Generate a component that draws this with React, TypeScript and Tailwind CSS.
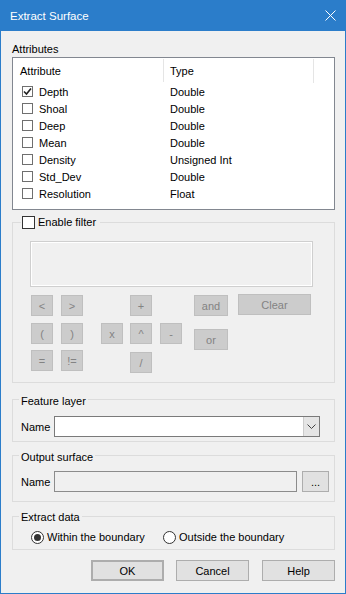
import React from "react";

const rows = [
  { name: "Depth", type: "Double", checked: true },
  { name: "Shoal", type: "Double" },
  { name: "Deep", type: "Double" },
  { name: "Mean", type: "Double" },
  { name: "Density", type: "Unsigned Int" },
  { name: "Std_Dev", type: "Double" },
  { name: "Resolution", type: "Float" },
];

const OpBtn = ({ label, className = "" }: { label: string; className?: string }) => (
  <div
    className={`h-[21px] w-[22px] flex items-center justify-center bg-[#cccccc] border border-[#bfbfbf] text-[#838383] ${className}`}
  >
    {label}
  </div>
);

const ListCheck = ({ checked }: { checked?: boolean }) => (
  <div className="w-[11px] h-[11px] border border-[#6f6f6f] bg-white flex items-center justify-center shrink-0">
    {checked && (
      <svg width="9" height="9" viewBox="0 0 9 9">
        <path d="M1 4.5 L3.5 7 L8 1.5" fill="none" stroke="#222" strokeWidth="1.6" />
      </svg>
    )}
  </div>
);

const Legend = ({ text, className = "" }: { text: string; className?: string }) => (
  <div className={`flex h-[14px] ${className}`}>
    <span className="ml-[6px] px-[2px] bg-[#f0f0f0]">{text}</span>
  </div>
);

const Radio = ({ checked }: { checked?: boolean }) => (
  <div className="w-[13px] h-[13px] rounded-full border border-[#333] bg-white flex items-center justify-center shrink-0">
    {checked && <div className="w-[7px] h-[7px] rounded-full bg-[#333]" />}
  </div>
);

const DlgBtn = ({ label, className = "" }: { label: string; className?: string }) => (
  <div
    className={`w-[73px] h-[21px] flex items-center justify-center bg-[#e1e1e1] border border-[#adadad] ${className}`}
  >
    {label}
  </div>
);

export default function App() {
  return (
    <div className="w-[346px] h-[594px] bg-[#2b7dca] flex flex-col font-['Liberation_Sans',Arial,sans-serif] text-[11px] leading-[14px] text-black">
      {/* title bar */}
      <div className="h-[31px] shrink-0 flex items-center pl-[10px] pr-[10px] text-white text-[11.5px]">
        <span className="flex-1">Extract Surface</span>
        <svg width="11" height="11" viewBox="0 0 11 11">
          <path d="M0.5 0.5 L10.5 10.5 M10.5 0.5 L0.5 10.5" stroke="#fff" strokeWidth="1" />
        </svg>
      </div>

      <div className="flex-1 mx-px mb-px bg-[#f0f0f0] pl-[11px] pr-[10px] flex flex-col">
        <div className="mt-[11px] h-[14px]">Attributes</div>

        {/* attribute list */}
        <div className="mt-px h-[153px] border border-[#828790] bg-white">
          <div className="flex items-center h-[25px]">
            <div className="w-[150px] pl-[7px] mt-px">Attribute</div>
            <div className="w-px h-[23px] bg-[#e5e5e5]" />
            <div className="w-[149px] pl-[6px] mt-px">Type</div>
            <div className="w-px h-[24px] bg-[#e5e5e5]" />
          </div>
          {rows.map((r) => (
            <div key={r.name} className="flex items-center h-[17px]">
              <div className="w-[157px] flex items-center pl-[9px]">
                <ListCheck checked={r.checked} />
                <span className="ml-[6px]">{r.name}</span>
              </div>
              <span>{r.type}</span>
            </div>
          ))}
        </div>

        {/* filter */}
        <div className="mt-[12px] border border-[#dcdcdc] pb-[9px]">
          <div className="-mt-[7px] h-[13px] flex">
            <div className="ml-[8px] px-px pr-[4px] bg-[#f0f0f0] flex items-center">
              <div className="w-[13px] h-[13px] border border-[#333] bg-white" />
              <span className="ml-[3px] leading-[13px]">Enable filter</span>
            </div>
          </div>
          <div className="mt-[12px] ml-[17px] w-[283px] h-[46px] border border-[#cfcfcf] bg-[#f0f0f0] shadow-[inset_0_0_0_1px_#ffffff]" />
          <div className="mt-[7px] ml-[18px] flex items-start">
            <div className="flex flex-col">
              <OpBtn label="<" className="mt-px" />
              <OpBtn label="(" className="mt-[7px]" />
              <OpBtn label="=" className="mt-[6px]" />
            </div>
            <div className="flex flex-col ml-[8px]">
              <OpBtn label=">" className="mt-px" />
              <OpBtn label=")" className="mt-[7px]" />
              <OpBtn label="!=" className="mt-[6px]" />
            </div>
            <div className="flex flex-col ml-[18px]">
              <OpBtn label="x" className="mt-[29px]" />
            </div>
            <div className="flex flex-col ml-[7px]">
              <OpBtn label="+" className="mt-px" />
              <OpBtn label="^" className="mt-[7px]" />
              <OpBtn label="/" className="mt-[8px]" />
            </div>
            <div className="flex flex-col ml-[8px]">
              <OpBtn label="-" className="mt-[29px]" />
            </div>
            <div className="flex flex-col ml-[12px]">
              <OpBtn label="and" className="mt-px w-[34px]" />
              <OpBtn label="or" className="mt-[13px] w-[34px]" />
            </div>
            <div className="flex flex-col ml-[10px]">
              <OpBtn label="Clear" className="w-[73px]" />
            </div>
          </div>
        </div>

        {/* feature layer */}
        <div className="mt-[16px] border border-[#dcdcdc] pb-[4px]">
          <Legend text="Feature layer" className="-mt-[6px]" />
          <div className="mt-[8px] flex items-center h-[21px]">
            <span className="ml-[8px] w-[33px]">Name</span>
            <div className="w-[266px] h-[21px] border border-[#7a7a7a] bg-white flex justify-end">
              <div className="w-[16px] h-full bg-[#e5e5e5] border-l border-[#cccccc] flex items-center justify-center">
                <svg width="9" height="5" viewBox="0 0 9 5">
                  <path d="M0.5 0.5 L4.5 4.5 L8.5 0.5" fill="none" stroke="#444" strokeWidth="1" />
                </svg>
              </div>
            </div>
          </div>
        </div>

        {/* output surface */}
        <div className="mt-[13px] border border-[#dcdcdc] pb-[9px]">
          <Legend text="Output surface" className="-mt-[6px]" />
          <div className="mt-[7px] flex items-center h-[21px]">
            <span className="ml-[8px] w-[33px]">Name</span>
            <div className="w-[243px] h-[21px] border border-[#8c8c8c] bg-[#f0f0f0]" />
            <div className="ml-[5px] w-[27px] h-[21px] border border-[#adadad] bg-[#e1e1e1] flex items-center justify-center">
              ...
            </div>
          </div>
        </div>

        {/* extract data */}
        <div className="mt-[14px] border border-[#dcdcdc] pb-[5px]">
          <Legend text="Extract data" className="-mt-[7px]" />
          <div className="mt-[6px] h-[14px] flex items-center">
            <div className="ml-[18px] w-[132px] flex items-center">
              <Radio checked />
              <span className="ml-[3px]">Within the boundary</span>
            </div>
            <div className="flex items-center">
              <Radio />
              <span className="ml-[3px]">Outside the boundary</span>
            </div>
          </div>
        </div>

        {/* buttons */}
        <div className="mt-[10px] flex h-[21px]">
          <DlgBtn label="OK" className="ml-[79px] border-2 border-[#0078d7]" />
          <DlgBtn label="Cancel" className="ml-[12px]" />
          <DlgBtn label="Help" className="ml-[13px]" />
        </div>
      </div>
    </div>
  );
}
